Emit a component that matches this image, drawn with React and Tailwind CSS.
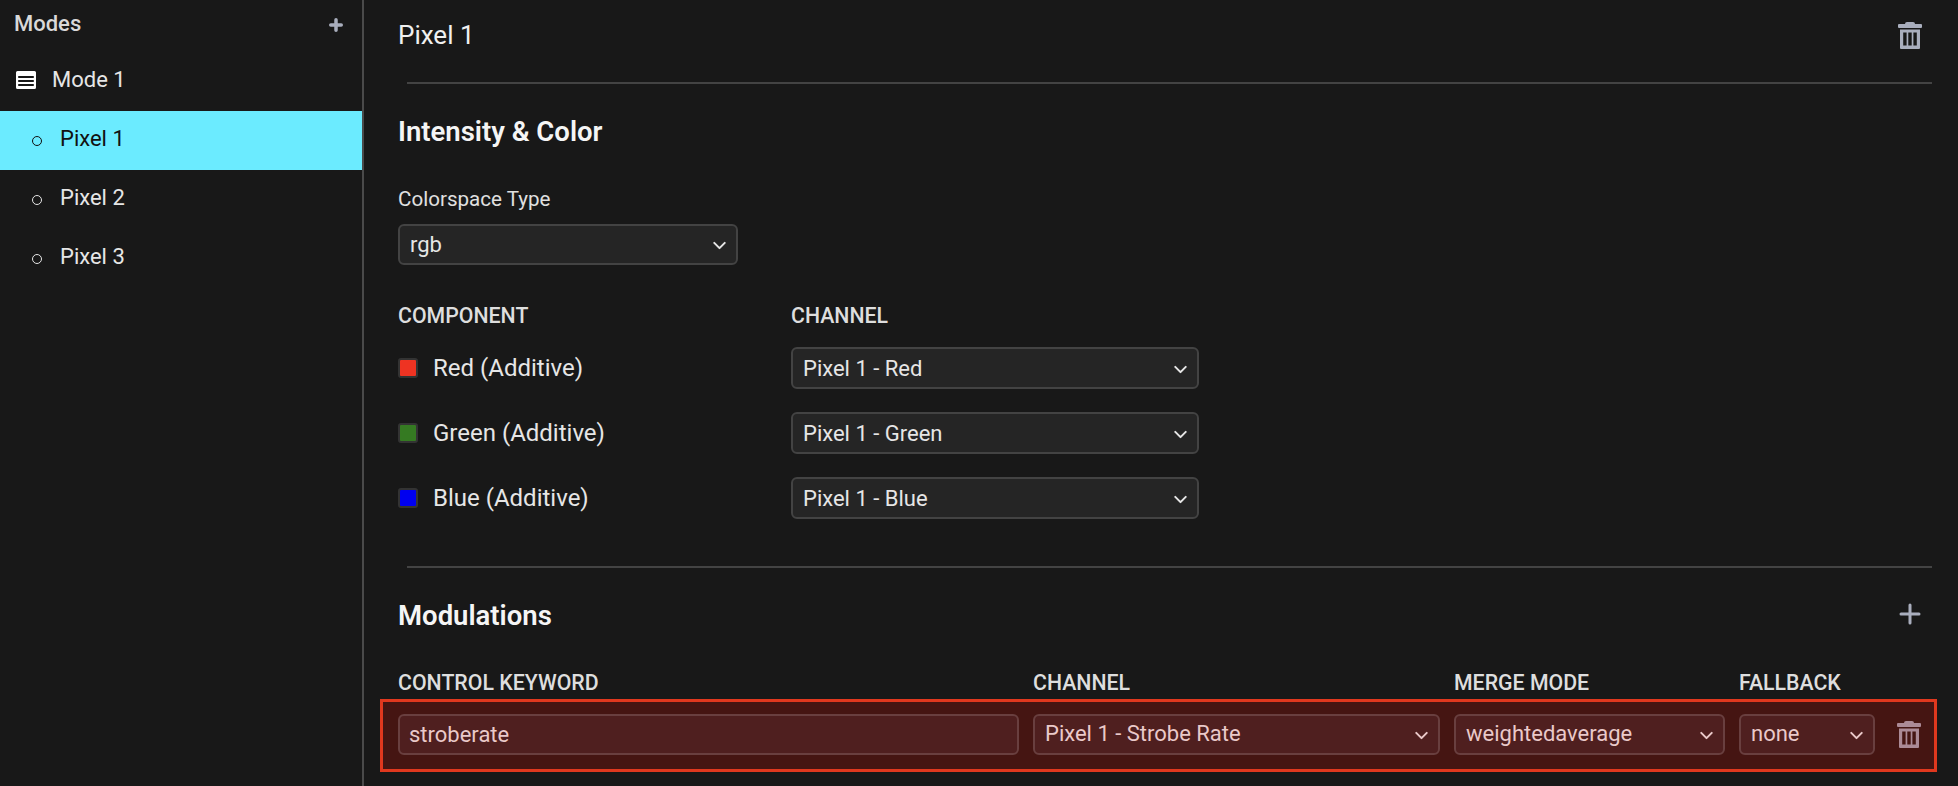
import React from 'react'
import { ChevronDown } from 'lucide-react'

const TrashIcon = ({ className }) => (
  <svg viewBox="0 0 24 27" className={className} fill="currentColor">
    <rect x="7" y="0" width="10" height="4" rx="2" />
    <rect x="0" y="2" width="24" height="4" rx="1" />
    <path
      fillRule="evenodd"
      d="M2 7.5h20V26a1 1 0 0 1-1 1H3a1 1 0 0 1-1-1zM5.2 10.500v13h3.400v-13zM10.300 10.500v13h3.400v-13zM15.400 10.500v13h3.400v-13z"
    />
  </svg>
)

const ListIcon = () => (
  <svg viewBox="0 0 20 18" className="w-5 h-[18px] text-white" fill="currentColor">
    <path
      fillRule="evenodd"
      d="M1.500 0h17A1.500 1.500 0 0 1 20 1.500v15a1.500 1.500 0 0 1-1.500 1.500h-17A1.500 1.500 0 0 1 0 16.500v-15A1.500 1.500 0 0 1 1.500 0zM2.200 5v2h15.600V5zM2.200 9v2h15.600V9zM2.200 13v2h15.600v-2z"
    />
  </svg>
)

const PlusIcon = ({ size, weight, className }) => (
  <svg viewBox="0 0 24 24" width={size} height={size} className={className} fill="none" stroke="currentColor" strokeWidth={weight} strokeLinecap="round">
    <path d="M12 3v18M3 12h18" />
  </svg>
)

const Select = ({ value, danger, className = '' }) => (
  <button
    className={`flex items-center justify-between h-[42px] pl-[10px] pr-[6px] rounded-[6px] border-2 text-[22px] leading-[28px] text-left ${
      danger ? 'bg-[#4f1f1f] border-[#693f3f] text-[#eac9c9]' : 'bg-[#252525] border-[#434343] text-[#e6e6e6]'
    } ${className}`}
  >
    <span>{value}</span>
    <ChevronDown size={21} strokeWidth={2.3} className={danger ? 'text-[#eac9c9] mt-[2px]' : 'text-[#e6e6e6] mt-[2px]'} />
  </button>
)

const SectionDivider = () => <div className="h-[2px] bg-[#434343] ml-[9px] -mr-[10px]" />

const TreeItem = ({ label, active }) => (
  <div className={`h-[59px] flex items-center pl-[32px] pb-[3px] gap-[18px] text-[22px] leading-[28px] ${active ? 'bg-[#6bebff] text-[#111111]' : 'text-[#e6e6e6]'}`}>
    <span className={`w-[10px] h-[10px] mt-[3px] rounded-full border-[1.5px] ${active ? 'border-[#111111]' : 'border-[#e6e6e6]'}`} />
    {label}
  </div>
)

const components = [
  { label: 'Red (Additive)', color: 'bg-[#ee3322]', channel: 'Pixel 1 - Red' },
  { label: 'Green (Additive)', color: 'bg-[#357a22]', channel: 'Pixel 1 - Green' },
  { label: 'Blue (Additive)', color: 'bg-[#0000f0]', channel: 'Pixel 1 - Blue' },
]

const App = () => {
  return (
    <div className="flex w-full h-[786px] overflow-hidden bg-[#181818] font-['Roboto',sans-serif]">
      <aside className="w-[364px] shrink-0 border-r-2 border-[#4a4a4a]">
        <div className="h-[52px] flex items-center justify-between pl-[14px] pr-[19px] pb-[4px]">
          <span className="text-[22px] leading-[28px] font-medium text-[#d9d9d9]">Modes</span>
          <PlusIcon size={14} weight={6} className="text-[#a9aebd] mt-[2px]" />
        </div>
        <div className="h-[59px] flex items-center pl-4 pb-1 gap-4 text-[22px] leading-[28px] text-[#e6e6e6]">
          <ListIcon />
          Mode 1
        </div>
        <TreeItem label="Pixel 1" active />
        <TreeItem label="Pixel 2" />
        <TreeItem label="Pixel 3" />
      </aside>

      <main className="flex-1 min-w-0 pl-[34px] pr-[36px]">
        <div className="h-[70px] flex items-center justify-between">
          <h1 className="text-[26px] leading-[34px] text-[#f0f0f0]">Pixel 1</h1>
          <TrashIcon className="w-6 h-[27px] text-[#a9aebd]" />
        </div>
        <div className="mt-3">
          <SectionDivider />
        </div>

        <h2 className="mt-[32px] text-[27.500px] leading-[32px] font-semibold text-[#f5f5f5]">Intensity &amp; Color</h2>
        <div className="mt-[39px] text-[20.600px] leading-[24px] text-[#e0e0e0]">Colorspace Type</div>
        <Select value="rgb" className="mt-[13px] w-[340px] !h-[41px]" />

        <div className="mt-[39px] grid grid-cols-[393px_408px] text-[21.300px] leading-[24px] font-medium text-[#dedede]">
          <span>COMPONENT</span>
          <span>CHANNEL</span>
        </div>
        <div className="mt-[19px] flex flex-col gap-[23px]">
          {components.map((c) => (
            <div key={c.label} className="grid grid-cols-[393px_408px] items-center">
              <div className="flex items-center gap-[15px] text-[24px] leading-[30px] text-[#e6e6e6]">
                <span className={`w-5 h-5 rounded-[3px] border-2 border-[#333333] ${c.color}`} />
                {c.label}
              </div>
              <Select value={c.channel} className="pt-[1px]" />
            </div>
          ))}
        </div>

        <div className="mt-[47px]">
          <SectionDivider />
        </div>

        <div className="mt-[32px] flex items-center justify-between h-[32px]">
          <h2 className="text-[27.500px] leading-[32px] font-semibold text-[#f5f5f5]">Modulations</h2>
          <PlusIcon size={24} weight={3} className="text-[#a9aebd] -mt-1" />
        </div>

        <div className="mt-[39px] grid grid-cols-[621px_407px_271px_136px] gap-x-[14px] text-[21.300px] leading-[24px] font-medium text-[#dedede]">
          <span className="whitespace-nowrap">CONTROL KEYWORD</span>
          <span>CHANNEL</span>
          <span>MERGE MODE</span>
          <span>FALLBACK</span>
        </div>
        <div className="mt-1 -ml-[18px] -mr-[15px] h-[73px] border-[3px] border-[#e0381e] bg-[#451512] pl-[15px] pb-[3px] flex items-center">
          <div className="grid grid-cols-[621px_407px_271px_136px_auto] gap-x-[14px] items-center">
            <input
              readOnly
              value="stroberate"
              className="h-[41px] px-[9px] rounded-[6px] border-2 border-[#693f3f] bg-[#4f1f1f] text-[22px] text-[#eac9c9] outline-none"
            />
            <Select danger value="Pixel 1 - Strobe Rate" className="!h-[41px]" />
            <Select danger value="weightedaverage" className="!h-[41px]" />
            <Select danger value="none" className="!h-[41px]" />
            <TrashIcon className="w-6 h-[27px] ml-2 text-[#ab8a96]" />
          </div>
        </div>
      </main>
    </div>
  )
}

export default App
